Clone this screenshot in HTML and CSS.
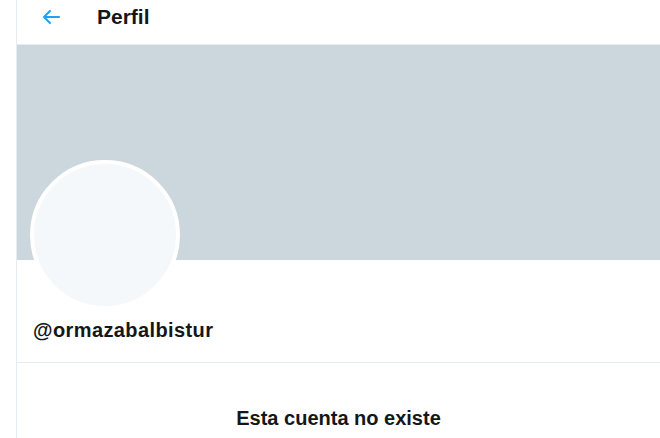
FILE: index.html
```html
<!DOCTYPE html>
<html lang="es">

<head>
    <meta charset="UTF-8">
    <meta name="viewport" content="width=device-width, initial-scale=1.0">
    <title>Perfil</title>

    <link rel="stylesheet" href="styles.css">
</head>

<body>

    <main class="column">
        <header class="topbar">
            <a class="back" href="#">
                <svg viewBox="0 0 24 24" width="24" height="24">
                    <path d="M20 11H7.414l4.293-4.293c.39-.39.39-1.023 0-1.414s-1.023-.39-1.414 0l-6 6c-.39.39-.39 1.023 0 1.414l6 6c.195.195.45.293.707.293s.512-.098.707-.293c.39-.39.39-1.023 0-1.414L7.414 13H20c.553 0 1-.447 1-1s-.447-1-1-1z"></path>
                </svg>
            </a>
            <h1>Perfil</h1>
        </header>

        <div class="banner"></div>

        <section class="profile">
            <div class="avatar"></div>
            <p class="handle">@ormazabalbistur</p>
        </section>

        <section class="empty">
            <p>Esta cuenta no existe</p>
        </section>
    </main>

</body>

</html>
```

FILE: styles.css
```css
body {
    font-family: "Liberation Sans", Arial, sans-serif;
    margin: 0;
    background-color: #fff;
    color: #14171a;
    overflow: hidden;
}

.column {
    margin-left: 16px;
    border-left: 1px solid #e6ecf0;
    min-height: 438px;
}

.topbar {
    display: flex;
    align-items: center;
    height: 34px;
    padding: 0 0 10px 22px;
    border-bottom: 1px solid #e6ecf0;
}

.back {
    display: flex;
    margin-right: 34px;
}

.back svg {
    fill: #1da1f2;
}

.topbar h1 {
    margin: 0;
    font-size: 21px;
    line-height: 24px;
    font-weight: bold;
}

.banner {
    height: 215px;
    background-color: #ccd6dd;
}

.profile {
    display: flex;
    flex-direction: column;
    padding: 0 16px 0 13px;
    border-bottom: 1px solid #e6ecf0;
    height: 102px;
}

.avatar {
    width: 142px;
    height: 142px;
    margin-top: -100px;
    border: 4px solid #fff;
    border-radius: 50%;
    background-color: #f5f8fa;
}

.handle {
    margin: 8px 0 0 3px;
    font-size: 20px;
    line-height: 24px;
    font-weight: bold;
    letter-spacing: 0.4px;
}

.empty {
    text-align: center;
    padding-top: 43px;
}

.empty p {
    margin: 0;
    font-size: 20px;
    line-height: 24px;
    font-weight: bold;
}
```
